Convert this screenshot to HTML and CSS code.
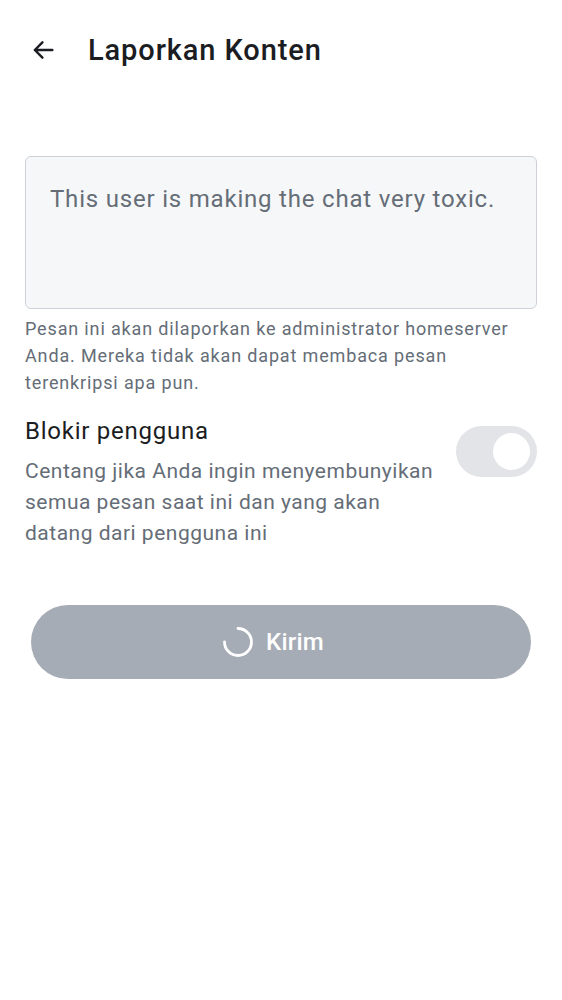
FILE: index.html
```html
<!DOCTYPE html>
<html lang="id">
<head>
<meta charset="utf-8">
<link rel="stylesheet" href="styles.css">
</head>
<body>
<div class="screen">
  <header class="topbar">
    <button class="back" aria-label="Kembali">
      <svg width="28" height="28" viewBox="0 0 24 24"><path d="M20 12H5M11.5 5.5 5 12l6.5 6.5" fill="none" stroke="#1b1d22" stroke-width="2.1" stroke-linecap="round" stroke-linejoin="round"/></svg>
    </button>
    <h1 class="title">Laporkan Konten</h1>
  </header>

  <main class="content">
    <div class="field">This user is making the chat very toxic.</div>
    <p class="hint">Pesan ini akan dilaporkan ke administrator homeserver Anda. Mereka tidak akan dapat membaca pesan terenkripsi apa pun.</p>

    <div class="block-row">
      <div class="block-text">
        <div class="block-title">Blokir pengguna</div>
        <div class="block-desc">Centang jika Anda ingin menyembunyikan semua pesan saat ini dan yang akan datang dari pengguna ini</div>
      </div>
      <div class="toggle"><span class="knob"></span></div>
    </div>

    <button class="send">
      <svg class="spinner" width="32" height="32" viewBox="0 0 32 32"><path d="M16 2.5 A13.5 13.5 0 1 1 2.5 16" fill="none" stroke="#fff" stroke-width="2.8" stroke-linecap="round"/></svg>
      <span>Kirim</span>
    </button>
  </main>
</div>
</body>
</html>
```

FILE: styles.css
```css
html, body {
  margin: 0;
  padding: 0;
  background: #ffffff;
}
body {
  font-family: Roboto, "Noto Sans", sans-serif;
  color: #1b1d22;
}
.screen {
  width: 562px;
  min-height: 1000px;
}
.topbar {
  display: flex;
  align-items: center;
  height: 100px;
  padding-left: 29px;
}
.back {
  border: 0;
  background: none;
  padding: 0;
  width: 28px;
  height: 28px;
  display: flex;
  align-items: center;
  justify-content: center;
  margin-right: 31px;
}
.title {
  margin: 0;
  font-family: Roboto, sans-serif;
  font-weight: 500;
  font-size: 29px;
  color: #1b1d22;
  letter-spacing: 0.9px;
}
.content {
  padding: 56px 25px 0 25px;
  display: flex;
  flex-direction: column;
}
.field {
  box-sizing: border-box;
  height: 153px;
  border: 1px solid #cdd1d7;
  border-radius: 6px;
  background: #f6f7f9;
  padding: 27px 24px 0 24px;
  font-size: 24px;
  line-height: 30px;
  color: #656d77;
  letter-spacing: 0.8px;
}
.hint {
  margin: 6px 0 0 0;
  font-size: 18px;
  line-height: 27px;
  letter-spacing: 0.85px;
  color: #656d77;
}
.block-row {
  display: flex;
  align-items: flex-start;
  justify-content: space-between;
  margin-top: 20px;
}
.block-text {
  width: 418px;
}
.block-title {
  font-size: 24px;
  line-height: 30px;
  color: #1b1d22;
  letter-spacing: 0.75px;
}
.block-desc {
  margin-top: 10px;
  font-size: 21px;
  line-height: 31px;
  letter-spacing: 0.5px;
  color: #656d77;
}
.toggle {
  box-sizing: border-box;
  width: 81px;
  height: 51px;
  border-radius: 26px;
  background: #e2e4e7;
  display: flex;
  align-items: center;
  justify-content: flex-end;
  padding-right: 7px;
  margin-top: 10px;
}
.knob {
  width: 37px;
  height: 37px;
  border-radius: 50%;
  background: #ffffff;
}
.send {
  margin: 56px 6px 0 6px;
  height: 74px;
  border: 0;
  border-radius: 37px;
  background: #a6acb5;
  color: #ffffff;
  display: flex;
  align-items: center;
  justify-content: center;
  gap: 12px;
  font-family: Roboto, sans-serif;
  font-weight: 500;
  font-size: 24px;
  letter-spacing: 0.2px;
  padding: 0 16px 0 0;
}
.spinner {
  display: block;
}
```
